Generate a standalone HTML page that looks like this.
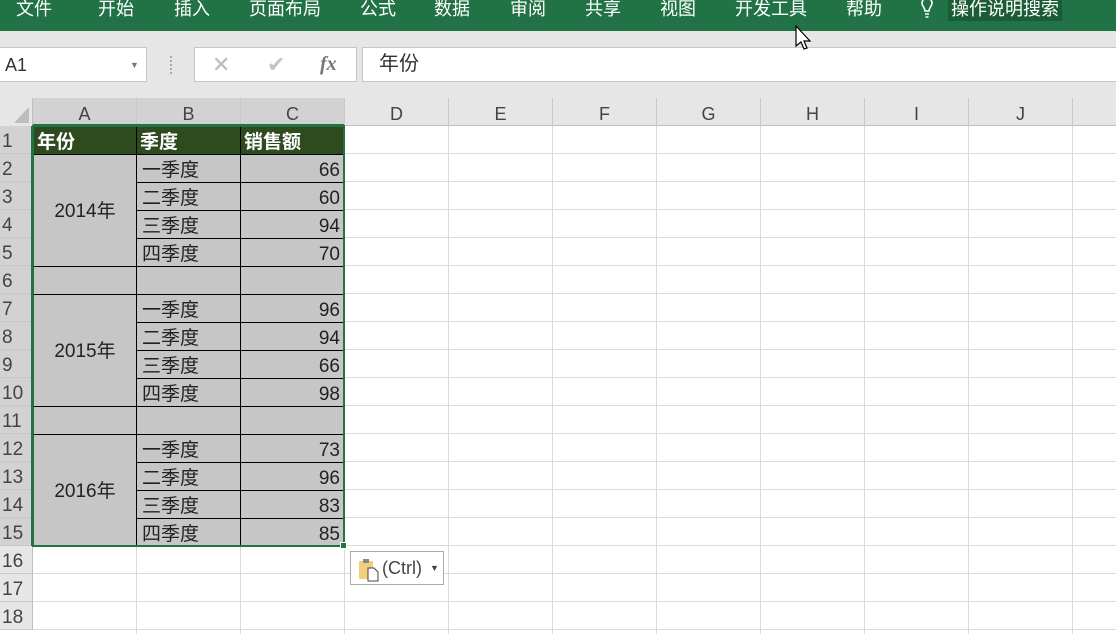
<!DOCTYPE html>
<html><head><meta charset="utf-8"><style>
*{margin:0;padding:0;box-sizing:border-box}
body{width:1116px;height:634px;overflow:hidden;background:#fff;position:relative;font-family:"Liberation Sans","Noto Sans CJK SC",sans-serif;}
.a{position:absolute}
#menu{left:0;top:0;width:1116px;height:31px;background:#217346;color:#fff;font-size:18px}
#menu span{position:absolute;top:-5px;white-space:nowrap}
#band{left:0;top:31px;width:1116px;height:67px;background:#e6e6e6}
.box{background:#fff;border:1px solid #c6c6c6}
#colh{left:0;top:98px;width:1116px;height:28px;background:#e6e6e6;border-bottom:1px solid #bfbfbf}
.ch{position:absolute;top:98px;height:28px;width:104px;text-align:center;font-size:18px;color:#444;line-height:32px;border-right:1px solid #c8c8c8}
.rh{position:absolute;left:0;width:33px;height:28px;font-size:19px;color:#444;line-height:32px;padding-left:2px;border-bottom:1px solid #c8c8c8;border-right:1px solid #bfbfbf;background:#e6e6e6}
#grid{left:33px;top:126px;width:1083px;height:508px;background-image:linear-gradient(to right,transparent 103px,#dadada 103px),linear-gradient(to bottom,transparent 27px,#dadada 27px);background-size:104px 28px}
.c{position:absolute;background:#c6c6c6;border:1px solid #000;font-size:19px;color:#222;line-height:31px;white-space:nowrap;overflow:hidden}
.h{background:#2e4a1f;color:#fff;font-weight:bold;padding-left:3px}
.b{padding-left:5px}
.n{text-align:right;padding-right:3px}
</style></head><body>
<div id="menu" class="a">
<span style="left:16px">文件</span><span style="left:98px">开始</span><span style="left:174px">插入</span><span style="left:249px">页面布局</span><span style="left:360px">公式</span><span style="left:434px">数据</span><span style="left:510px">审阅</span><span style="left:585px">共享</span><span style="left:660px">视图</span><span style="left:735px">开发工具</span><span style="left:846px">帮助</span>
<svg style="position:absolute;left:918px;top:0" width="18" height="22" viewBox="0 0 18 22"><path d="M4 3a5 5 0 1 1 10 0c0 3-3 5-3 8H7c0-3-3-5-3-8zM7 14h4M7.5 17h3" stroke="#fff" stroke-width="1.6" fill="none"/></svg>
<span style="left:948px;background:#1a5c36;padding:0 3px">操作说明搜索</span>
</div>
<div id="band" class="a"></div>
<div class="a box" style="left:-1px;top:47px;width:148px;height:35px;font-size:18px;line-height:35px;padding-left:5px;color:#333">A1<span style="position:absolute;left:130px;top:0;font-size:9px;color:#777">▼</span></div>
<div class="a" style="left:170px;top:56px;width:2px;height:18px;border-left:2px dotted #aaa"></div>
<div class="a box" style="left:194px;top:47px;width:163px;height:35px;color:#bbb;font-size:22px;line-height:33px">
<span style="position:absolute;left:17px">✕</span><span style="position:absolute;left:72px;color:#c4c4c4">✔</span><span style="position:absolute;left:125px;font-family:'Liberation Serif',serif;font-style:italic;font-weight:bold;color:#777;font-size:20px">fx</span></div>
<div class="a box" style="left:362px;top:47px;width:760px;height:35px;font-size:20px;line-height:33px;padding-left:16px;color:#333">年份</div>
<div id="colh" class="a"></div>
<div class="a" style="left:0;top:98px;width:33px;height:28px;background:#e6e6e6;border-right:1px solid #bfbfbf"><svg width="33" height="28"><path d="M29 25V9L14 25z" fill="#bdbdbd"/></svg></div>
<div class="ch" style="left:33px;background:#d2d2d2">A</div><div class="ch" style="left:137px;background:#d2d2d2">B</div><div class="ch" style="left:241px;background:#d2d2d2">C</div><div class="ch" style="left:345px">D</div><div class="ch" style="left:449px">E</div><div class="ch" style="left:553px">F</div><div class="ch" style="left:657px">G</div><div class="ch" style="left:761px">H</div><div class="ch" style="left:865px">I</div><div class="ch" style="left:969px">J</div>
<div class="a" style="left:33px;top:124px;width:311px;height:2px;background:#217346"></div>
<div id="grid" class="a"></div>
<div class="rh" style="top:126px;background:#d2d2d2">1</div><div class="rh" style="top:154px;background:#d2d2d2">2</div><div class="rh" style="top:182px;background:#d2d2d2">3</div><div class="rh" style="top:210px;background:#d2d2d2">4</div><div class="rh" style="top:238px;background:#d2d2d2">5</div><div class="rh" style="top:266px;background:#d2d2d2">6</div><div class="rh" style="top:294px;background:#d2d2d2">7</div><div class="rh" style="top:322px;background:#d2d2d2">8</div><div class="rh" style="top:350px;background:#d2d2d2">9</div><div class="rh" style="top:378px;background:#d2d2d2">10</div><div class="rh" style="top:406px;background:#d2d2d2">11</div><div class="rh" style="top:434px;background:#d2d2d2">12</div><div class="rh" style="top:462px;background:#d2d2d2">13</div><div class="rh" style="top:490px;background:#d2d2d2">14</div><div class="rh" style="top:518px;background:#d2d2d2">15</div><div class="rh" style="top:546px">16</div><div class="rh" style="top:574px">17</div><div class="rh" style="top:602px">18</div>
<div class="a" style="left:31px;top:126px;width:2px;height:420px;background:#217346"></div>

<div class="c h" style="left:33px;top:126px;width:104px;height:29px">年份</div>
<div class="c h" style="left:136px;top:126px;width:105px;height:29px">季度</div>
<div class="c h" style="left:240px;top:126px;width:104px;height:29px">销售额</div>

<div class="c" style="left:33px;top:154px;width:104px;height:113px;text-align:center;line-height:114px">2014年</div>
<div class="c b" style="left:136px;top:154px;width:105px;height:29px">一季度</div><div class="c n" style="left:240px;top:154px;width:104px;height:29px">66</div>
<div class="c b" style="left:136px;top:182px;width:105px;height:29px">二季度</div><div class="c n" style="left:240px;top:182px;width:104px;height:29px">60</div>
<div class="c b" style="left:136px;top:210px;width:105px;height:29px">三季度</div><div class="c n" style="left:240px;top:210px;width:104px;height:29px">94</div>
<div class="c b" style="left:136px;top:238px;width:105px;height:29px">四季度</div><div class="c n" style="left:240px;top:238px;width:104px;height:29px">70</div>
<div class="c" style="left:33px;top:266px;width:104px;height:29px"></div><div class="c" style="left:136px;top:266px;width:105px;height:29px"></div><div class="c" style="left:240px;top:266px;width:104px;height:29px"></div>

<div class="c" style="left:33px;top:294px;width:104px;height:113px;text-align:center;line-height:114px">2015年</div>
<div class="c b" style="left:136px;top:294px;width:105px;height:29px">一季度</div><div class="c n" style="left:240px;top:294px;width:104px;height:29px">96</div>
<div class="c b" style="left:136px;top:322px;width:105px;height:29px">二季度</div><div class="c n" style="left:240px;top:322px;width:104px;height:29px">94</div>
<div class="c b" style="left:136px;top:350px;width:105px;height:29px">三季度</div><div class="c n" style="left:240px;top:350px;width:104px;height:29px">66</div>
<div class="c b" style="left:136px;top:378px;width:105px;height:29px">四季度</div><div class="c n" style="left:240px;top:378px;width:104px;height:29px">98</div>
<div class="c" style="left:33px;top:406px;width:104px;height:29px"></div><div class="c" style="left:136px;top:406px;width:105px;height:29px"></div><div class="c" style="left:240px;top:406px;width:104px;height:29px"></div>

<div class="c" style="left:33px;top:434px;width:104px;height:112px;text-align:center;line-height:114px">2016年</div>
<div class="c b" style="left:136px;top:434px;width:105px;height:29px">一季度</div><div class="c n" style="left:240px;top:434px;width:104px;height:29px">73</div>
<div class="c b" style="left:136px;top:462px;width:105px;height:29px">二季度</div><div class="c n" style="left:240px;top:462px;width:104px;height:29px">96</div>
<div class="c b" style="left:136px;top:490px;width:105px;height:29px">三季度</div><div class="c n" style="left:240px;top:490px;width:104px;height:29px">83</div>
<div class="c b" style="left:136px;top:518px;width:105px;height:28px">四季度</div><div class="c n" style="left:240px;top:518px;width:104px;height:28px">85</div>

<div class="a" style="left:32px;top:125px;width:313px;height:422px;border:2px solid #217346"></div>
<div class="a" style="left:340px;top:542px;width:7px;height:7px;background:#217346;border:1px solid #fff"></div>

<div class="a" style="left:350px;top:551px;width:94px;height:34px;background:#fff;border:1px solid #ababab;font-size:18px;line-height:33px;color:#444">
<svg style="position:absolute;left:7px;top:5px" width="22" height="25" viewBox="0 0 22 25"><rect x="1" y="4" width="14" height="18" fill="#f2cf7a"/><rect x="5" y="2" width="6" height="4" fill="#888"/><path d="M10 11h6l4 4v9H10z" fill="#fff" stroke="#444"/></svg>
<span style="position:absolute;left:31px">(Ctrl)</span><span style="position:absolute;left:79px;font-size:9px">▼</span></div>

<svg class="a" style="left:794px;top:25px" width="20" height="28" viewBox="0 0 20 28"><path d="M2 1v20l5-4 3 7 3-1-3-7h6z" fill="#fff" stroke="#000" stroke-width="1.2"/></svg>
</body></html>
